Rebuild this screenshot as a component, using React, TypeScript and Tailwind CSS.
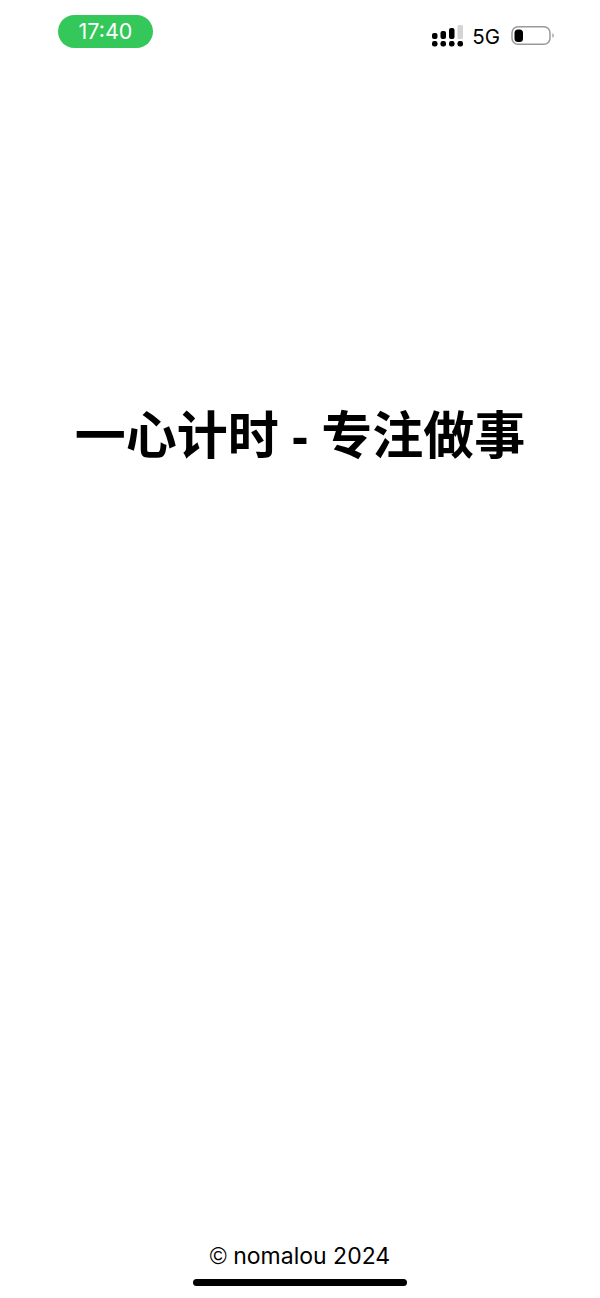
export default function App() {
  return (
    <div className="flex h-[1298px] w-[600px] flex-col overflow-hidden bg-white font-['Inter','Noto_Sans_CJK_SC',sans-serif] text-black">
      {/* status bar */}
      <div className="flex h-[52px] items-start justify-between pl-[58px] pr-[45px] pt-[15px]">
        <div className="flex h-[33px] w-[95px] items-center justify-center rounded-full bg-[#34c759] text-[21.5px] text-white">
          17:40
        </div>
        <div className="mt-[10px] flex items-center">
          <svg width="32" height="24" viewBox="0 0 32 24" fill="#000">
            <rect x="0" y="8" width="5.5" height="6" rx="2" />
            <rect x="8.5" y="6" width="5.5" height="8" rx="2" />
            <rect x="17" y="3" width="5.5" height="11" rx="2" />
            <rect x="25.5" y="0" width="5.5" height="14" rx="1.5" fill="#d4d4d4" />
            <rect x="0" y="16" width="5.5" height="5.5" rx="2.2" />
            <rect x="8.5" y="16" width="5.5" height="5.5" rx="2.2" />
            <rect x="17" y="16" width="5.5" height="5.5" rx="2.2" />
            <rect x="25.5" y="16" width="5.5" height="5.5" rx="2.2" />
          </svg>
          <span className="ml-[8px] text-[20.5px] leading-[24px]">5G</span>
          <svg className="ml-[11px]" width="44" height="24" viewBox="0 0 44 24">
            <rect x="1" y="1.75" width="38" height="17.5" rx="6" fill="none" stroke="#9a9a9a" strokeWidth="1.5" />
            <rect x="3.5" y="4.5" width="8.5" height="12.5" rx="3.5" fill="#000" />
            <path d="M41.5 8 Q44 10.5 41.5 13 Z" fill="#8a8a8a" />
          </svg>
        </div>
      </div>

      {/* title */}
      <div className="flex h-[770px] items-center justify-center">
        <h1 className="text-[51px] font-semibold whitespace-nowrap">
          一心计时 <span className="font-bold font-['Liberation_Sans','Noto_Sans_CJK_SC',sans-serif]">-</span> 专注做事
        </h1>
      </div>

      {/* footer */}
      <div className="mt-auto flex flex-col items-center pb-[12px]">
        <p className="text-[23px] leading-[28px]">
          <span className="font-['Liberation_Sans',sans-serif]">©</span> nomalou 2024
        </p>
        <div className="mt-[9px] h-[7px] w-[214px] rounded-full bg-black" />
      </div>
    </div>
  );
}
